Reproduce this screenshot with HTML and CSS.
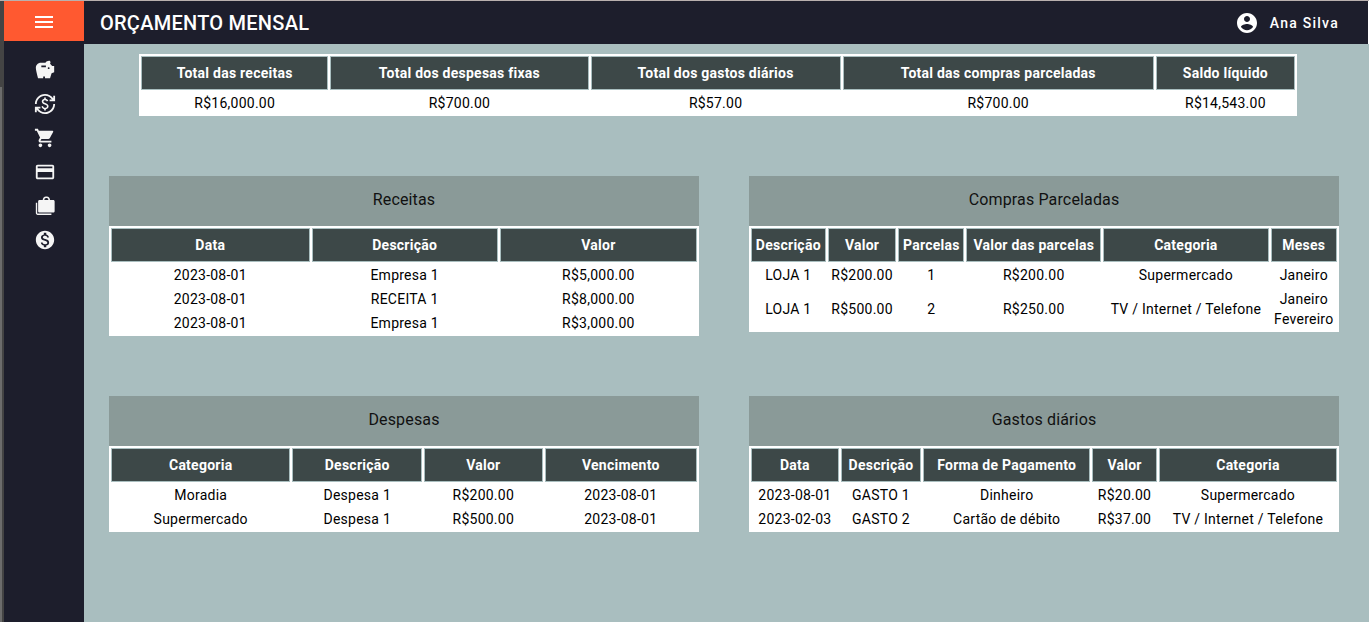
FILE: index.html
```html
<!DOCTYPE html>
<html lang="pt-BR">
<head>
<meta charset="utf-8">
<title>Orçamento Mensal</title>
<link rel="stylesheet" href="styles.css">
</head>
<body>
<div class="app">
  <div class="edge"><div class="edge-thumb"></div></div>
  <aside class="sidebar">
    <button class="menu-button" type="button" aria-label="Menu">
      <svg class="icon-large" viewBox="0 0 24 24"><path d="M3 18h18v-2H3v2zm0-5h18v-2H3v2zm0-7v2h18V6H3z"/></svg>
    </button>
    <nav class="nav">
      <a class="nav-link" href="#receitas" aria-label="Receitas"><svg class="icon" viewBox="0 0 24 24"><path d="M19.83 7.5l-2.27-2.27c.07-.42.18-.81.32-1.15.11-.26.15-.56.09-.87C17.84 2.49 17.14 1.99 16.4 2c-1.59.03-3 .81-3.9 2H7.5C4.46 4 2 6.46 2 9.5S4.5 21 4.5 21H10v-2h2v2h5.5l1.68-5.59L22 14.47V7.5h-2.17zM13 9H8V7h5v2zm3 2c-.55 0-1-.45-1-1s.45-1 1-1 1 .45 1 1-.45 1-1 1z"/></svg></a>
      <a class="nav-link" href="#despesas" aria-label="Despesas"><svg class="icon" viewBox="0 0 24 24"><path d="M12.89 11.1c-1.78-.59-2.64-.96-2.64-1.9 0-1.02 1.11-1.39 1.81-1.39 1.31 0 1.79.99 1.9 1.34l1.58-.67c-.15-.44-.82-1.91-2.66-2.23V5h-1.75v1.26c-2.6.56-2.62 2.85-2.62 2.96 0 2.27 2.25 2.91 3.35 3.31 1.58.56 2.28 1.07 2.28 2.03 0 1.13-1.05 1.61-1.98 1.61-1.82 0-2.34-1.87-2.4-2.09l-1.66.67c.63 2.19 2.28 2.78 3.02 2.96V19h1.75v-1.24c.52-.09 3.02-.59 3.02-3.22 0-1.39-.61-2.61-3-3.44zM3 21H1v-6h6v2H4.52c1.61 2.41 4.36 4 7.48 4 4.97 0 9-4.03 9-9h2c0 6.08-4.92 11-11 11-3.72 0-7.01-1.85-9-4.67V21zM1 12C1 5.92 5.92 1 12 1c3.72 0 7.01 1.85 9 4.67V3h2v6h-6V7h2.48C17.87 4.59 15.12 3 12 3c-4.97 0-9 4.03-9 9H1z"/></svg></a>
      <a class="nav-link" href="#gastos" aria-label="Gastos diários"><svg class="icon" viewBox="0 0 24 24"><path d="M7 18c-1.1 0-1.99.9-1.99 2S5.9 22 7 22s2-.9 2-2-.9-2-2-2zM1 2v2h2l3.6 7.59-1.35 2.45c-.16.28-.25.61-.25.96 0 1.1.9 2 2 2h12v-2H7.42c-.14 0-.25-.11-.25-.25l.03-.12.9-1.63h7.45c.75 0 1.41-.41 1.75-1.03l3.58-6.49c.08-.14.12-.31.12-.48 0-.55-.45-1-1-1H5.21l-.94-2H1zm16 16c-1.1 0-1.99.9-1.99 2s.89 2 1.99 2 2-.9 2-2-.9-2-2-2z"/></svg></a>
      <a class="nav-link" href="#compras" aria-label="Compras parceladas"><svg class="icon" viewBox="0 0 24 24"><path d="M20 4H4c-1.11 0-1.99.89-1.99 2L2 18c0 1.11.89 2 2 2h16c1.11 0 2-.89 2-2V6c0-1.11-.89-2-2-2zm0 14H4v-6h16v6zm0-10H4V6h16v2z"/></svg></a>
      <a class="nav-link" href="#categorias" aria-label="Categorias"><svg class="icon" viewBox="0 0 24 24"><path d="M2 8.500h1.500v11.700H19v1.500H4c-1.100 0-2-.9-2-2V8.500zM17.500 5.500c0-2.200-1.500-4-3.500-4h-1c-2 0-3.500 1.800-3.500 4H6c-.8 0-1.500.7-1.500 1.500v10.700c0 .8.7 1.500 1.500 1.500h15c.8 0 1.500-.7 1.500-1.500V7c0-.8-.7-1.500-1.500-1.500h-3.500zm-6.200 0c0-1.300.8-2.200 1.800-2.200h.8c1 0 1.800.9 1.800 2.200h-4.400z"/></svg></a>
      <a class="nav-link" href="#saldo" aria-label="Saldo"><svg class="icon" viewBox="0 0 24 24"><path d="M12 2C6.48 2 2 6.48 2 12s4.48 10 10 10 10-4.48 10-10S17.52 2 12 2zm1.41 16.09V20h-2.67v-1.93c-1.71-.36-3.16-1.46-3.27-3.4h1.96c.1 1.05.82 1.87 2.65 1.87 1.96 0 2.4-.98 2.4-1.59 0-.83-.44-1.61-2.67-2.14-2.48-.6-4.18-1.62-4.18-3.67 0-1.72 1.39-2.84 3.11-3.21V4h2.67v1.95c1.86.45 2.79 1.86 2.85 3.39H14.3c-.05-1.11-.64-1.87-2.22-1.87-1.5 0-2.4.68-2.4 1.64 0 .84.65 1.39 2.67 1.91s4.18 1.39 4.18 3.91c-.01 1.83-1.38 2.83-3.12 3.16z"/></svg></a>
    </nav>
  </aside>
  <div class="page">
    <header class="topbar">
      <h1 class="topbar-title">ORÇAMENTO MENSAL</h1>
      <button class="user" type="button">
        <svg class="icon-large" viewBox="0 0 24 24"><path d="M12 2C6.480 2 2 6.480 2 12s4.480 10 10 10 10-4.480 10-10S17.520 2 12 2zm0 3c1.660 0 3 1.340 3 3s-1.340 3-3 3-3-1.340-3-3 1.340-3 3-3zm0 14.200c-2.500 0-4.710-1.280-6-3.220.03-1.990 4-3.080 6-3.080 1.990 0 5.970 1.090 6 3.080-1.290 1.940-3.500 3.220-6 3.220z"/></svg>
        <span>Ana Silva</span>
      </button>
    </header>
    <main class="content">
      <section class="summary" id="saldo">
        <table class="table">
          <thead><tr><th>Total das receitas</th><th>Total dos despesas fixas</th><th>Total dos gastos diários</th><th>Total das compras parceladas</th><th>Saldo líquido</th></tr></thead>
          <tbody><tr><td>R$16,000.00</td><td>R$700.00</td><td>R$57.00</td><td>R$700.00</td><td>R$14,543.00</td></tr></tbody>
        </table>
      </section>
      <div class="cards">
        <section class="card" id="receitas">
          <h2 class="card-title">Receitas</h2>
          <table class="table">
            <thead><tr><th>Data</th><th>Descrição</th><th>Valor</th></tr></thead>
            <tbody>
              <tr><td>2023-08-01</td><td>Empresa 1</td><td>R$5,000.00</td></tr>
              <tr><td>2023-08-01</td><td>RECEITA 1</td><td>R$8,000.00</td></tr>
              <tr><td>2023-08-01</td><td>Empresa 1</td><td>R$3,000.00</td></tr>
            </tbody>
          </table>
        </section>
        <section class="card" id="compras">
          <h2 class="card-title">Compras Parceladas</h2>
          <table class="table">
            <thead><tr><th>Descrição</th><th>Valor</th><th>Parcelas</th><th>Valor das parcelas</th><th>Categoria</th><th>Meses</th></tr></thead>
            <tbody>
              <tr><td>LOJA 1</td><td>R$200.00</td><td>1</td><td>R$200.00</td><td>Supermercado</td><td>Janeiro</td></tr>
              <tr><td>LOJA 1</td><td>R$500.00</td><td>2</td><td>R$250.00</td><td>TV / Internet / Telefone</td><td>Janeiro<br>Fevereiro</td></tr>
            </tbody>
          </table>
        </section>
        <section class="card" id="despesas">
          <h2 class="card-title">Despesas</h2>
          <table class="table">
            <thead><tr><th>Categoria</th><th>Descrição</th><th>Valor</th><th>Vencimento</th></tr></thead>
            <tbody>
              <tr><td>Moradia</td><td>Despesa 1</td><td>R$200.00</td><td>2023-08-01</td></tr>
              <tr><td>Supermercado</td><td>Despesa 1</td><td>R$500.00</td><td>2023-08-01</td></tr>
            </tbody>
          </table>
        </section>
        <section class="card" id="gastos">
          <h2 class="card-title">Gastos diários</h2>
          <table class="table">
            <thead><tr><th>Data</th><th>Descrição</th><th>Forma de Pagamento</th><th>Valor</th><th>Categoria</th></tr></thead>
            <tbody>
              <tr><td>2023-08-01</td><td>GASTO 1</td><td>Dinheiro</td><td>R$20.00</td><td>Supermercado</td></tr>
              <tr><td>2023-02-03</td><td>GASTO 2</td><td>Cartão de débito</td><td>R$37.00</td><td>TV / Internet / Telefone</td></tr>
            </tbody>
          </table>
        </section>
      </div>
    </main>
  </div>
</div>
</body>
</html>
```
FILE: styles.css
```css
* {
  box-sizing: border-box;
}

body {
  margin: 0;
  background: #a9bebf;
  color: #000;
  font: 400 14px/20px Roboto, "Liberation Sans", sans-serif;
  letter-spacing: 0.0179em;
}

.app {
  display: flex;
  min-height: 100vh;
  border-top: 1px solid #b9b0ae;
}

.edge {
  display: flex;
  flex: none;
  width: 4px;
  padding-top: 86px;
  background: #444;
}

.edge-thumb {
  width: 2px;
  background: #6c6c6c;
}

.sidebar {
  flex: none;
  width: 80px;
  background: #1d1e2c;
}

.menu-button {
  display: flex;
  align-items: center;
  justify-content: center;
  width: 100%;
  height: 40px;
  padding: 2px 0 0;
  border: 0;
  background: #ff5930;
  color: #fff;
}

.nav {
  display: flex;
  flex-direction: column;
  align-items: center;
  gap: 12px;
  padding: 18px 0 0 2px;
}

.nav-link {
  display: flex;
  color: #f5f5f5;
}

.icon {
  width: 22px;
  height: 22px;
  fill: currentColor;
}

.icon-large {
  width: 24px;
  height: 24px;
  fill: currentColor;
}

.page {
  flex: 1;
  min-width: 0;
}

.topbar {
  display: flex;
  align-items: center;
  justify-content: space-between;
  height: 43px;
  padding: 0 29px 0 16px;
  background: #1d1e2c;
  border-right: 1px solid #fff;
  color: #fff;
}

.topbar-title {
  margin: 0;
  font-size: 20px;
  font-weight: 500;
  line-height: 32px;
  letter-spacing: 0.0125em;
}

.user {
  display: flex;
  align-items: center;
  gap: 11px;
  padding: 0;
  border: 0;
  background: none;
  color: inherit;
  font: 500 14px/20px Roboto, "Liberation Sans", sans-serif;
  letter-spacing: 0.0893em;
}

.content {
  padding: 10px 30px 0 25px;
}

.summary {
  margin: 0 42px 60px 30px;
}

.cards {
  display: grid;
  grid-template-columns: 1fr 1fr;
  align-items: start;
  gap: 60px 50px;
}

.card-title {
  margin: 0;
  padding: 12px 0 14px;
  background: #8a9a98;
  color: #111;
  font-size: 16px;
  font-weight: 400;
  line-height: 24px;
  letter-spacing: 0.0094em;
  text-align: center;
}

.table {
  width: 100%;
  background: #fff;
  border-spacing: 2px;
  text-align: center;
}

.table th {
  padding: 6px 1px;
  border: 1px solid #a9bebf;
  background: #3d4848;
  color: #fff;
  font-weight: 700;
}

.table td {
  padding: 1px;
}
```
